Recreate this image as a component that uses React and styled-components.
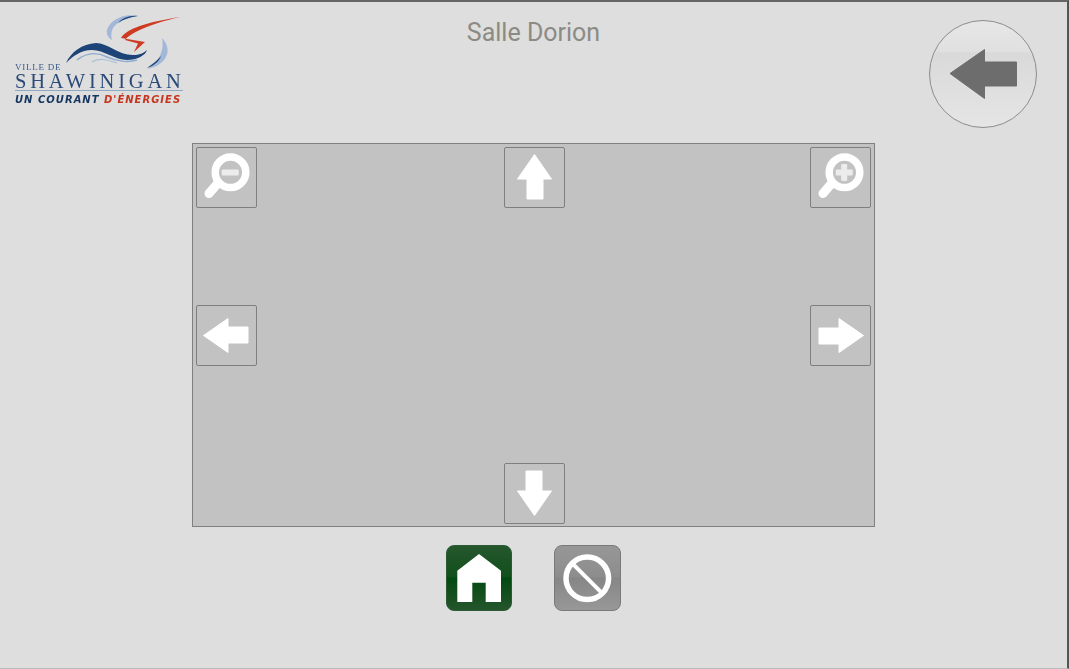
import React from 'react'
import styled, { createGlobalStyle } from 'styled-components'

const GlobalStyle = createGlobalStyle`
  html, body {
    margin: 0;
    padding: 0;
    height: 100%;
    overflow: hidden;
    background: #dedede;
  }
`

const Page = styled.div`
  box-sizing: border-box;
  width: 1069px;
  height: 669px;
  display: flex;
  flex-direction: column;
  align-items: center;
  background: #dedede;
  border-top: 2px solid #666;
  border-right: 2px solid #555;
  border-bottom: 1px solid #bbb;
  font-family: Roboto, 'Liberation Sans', sans-serif;
`

const Header = styled.header`
  width: 100%;
  height: 141px;
  display: grid;
  grid-template-columns: 1fr auto 1fr;
  align-items: start;
`

const Logo = styled.div`
  width: 169px;
  margin: 11px 0 0 14px;
  display: flex;
  flex-direction: column;
  filter: blur(0.3px);
`

const LogoMark = styled.svg`
  display: block;
  width: 169px;
  height: 50px;
  overflow: visible;
`

const LogoVille = styled.div`
  font-family: 'Liberation Serif', serif;
  font-size: 9px;
  line-height: 8px;
  letter-spacing: 0.75px;
  color: #3a5a8a;
  margin-left: 1px;
`

const LogoName = styled.div`
  font-family: 'Liberation Serif', serif;
  font-size: 20.5px;
  line-height: 18px;
  letter-spacing: 3.8px;
  color: #2b4a78;
  margin: 1px 0 0 1px;
  white-space: nowrap;
  border-bottom: 1.5px solid #8fa9c4;
`

const LogoSlogan = styled.div`
  font-family: 'DejaVu Sans', 'Liberation Sans', sans-serif;
  font-size: 10px;
  line-height: 11px;
  font-weight: 700;
  font-style: italic;
  letter-spacing: 1px;
  color: #14365f;
  margin: 3px 0 0 1px;
  white-space: nowrap;
`

const LogoAccent = styled.span`
  color: #c8351f;
`

const Title = styled.h1`
  margin: 16px 0 0;
  font-size: 25px;
  line-height: 29px;
  font-weight: 400;
  color: #8b8b84;
`

const BackButton = styled.button`
  justify-self: end;
  box-sizing: border-box;
  width: 108px;
  height: 108px;
  margin: 18px 30px 0 0;
  padding: 0;
  display: flex;
  align-items: center;
  justify-content: center;
  border: 1px solid #8c8c8c;
  border-radius: 50%;
  background: linear-gradient(#e7e7e7 0%, #e0e0e0 29%, #d9d9d9 30%, #dfdfdf 65%, #e5e5e5 100%);
`

const Panel = styled.section`
  box-sizing: border-box;
  width: 683px;
  height: 384px;
  padding: 3px 3px 2px;
  display: grid;
  grid-template-columns: 61px 63px 61px;
  grid-template-rows: 61px 61px 61px;
  justify-content: space-between;
  align-content: space-between;
  background: #c2c2c2;
  border: 1px solid #808080;
`

const PadButton = styled.button`
  box-sizing: border-box;
  width: 61px;
  height: 61px;
  padding: 0;
  justify-self: end;
  grid-column: ${({ $col }) => $col};
  grid-row: ${({ $row }) => $row};
  background: #c2c2c2;
  border: 1px solid #7f7f7f;
  border-radius: 2px;
`

const Glyph = styled.svg`
  display: block;
  width: 59px;
  height: 59px;
  transform: translateY(${({ $lift }) => -($lift || 0)}px) rotate(${({ $turn }) => $turn || 0}deg);
`

const Actions = styled.div`
  display: flex;
  gap: 42px;
  margin-top: 18px;
`

const ActionButton = styled.button`
  box-sizing: border-box;
  width: ${({ $tone }) => ($tone === 'green' ? '66px' : '67px')};
  height: 66px;
  padding: 0;
  border-radius: 8px;
  border: 1px solid ${({ $tone }) => ($tone === 'green' ? '#2c5a34' : '#797979')};
  background: ${({ $tone }) =>
    $tone === 'green'
      ? 'linear-gradient(#25562d 0%, #11501c 48%, #004a10 50%, #144f1f 75%, #24552c 100%)'
      : 'linear-gradient(#979797 0%, #8d8d8d 48%, #868686 50%, #8f8f8f 75%, #989898 100%)'};
`

const ActionGlyph = styled.svg`
  display: block;
  width: 100%;
  height: 64px;
`

const Arrow = ({ turn, lift }) => (
  <Glyph viewBox="0 0 59 59" $turn={turn} $lift={lift}>
    <path d="M29.5 6.5 L46.5 31 L38 31 L38 51 L22 51 L22 31 L12.5 31 Z" fill="#fff" stroke="#fff" strokeWidth="1" strokeLinejoin="round" />
  </Glyph>
)

const Magnifier = ({ plus }) => (
  <Glyph viewBox="0 0 59 59">
    <line x1="21" y1="35" x2="12" y2="45.5" stroke="#fff" strokeWidth="9" strokeLinecap="round" />
    <circle cx="33.5" cy="24.3" r="15.3" fill="none" stroke="#fff" strokeWidth="7.5" />
    <rect x="24.7" y="21.5" width="17" height="6" rx="1" fill="#ececec" />
    {plus && <rect x="30.2" y="16" width="6" height="17" rx="1" fill="#ececec" />}
  </Glyph>
)

export default function App() {
  return (
    <Page>
      <GlobalStyle />
      <Header>
        <Logo>
          <LogoMark viewBox="14 13 169 50">
            <path d="M66 63 C71 52 82 44 96 43 C108 43 118 55 133 55 C139 55 144 53 147 50 C146 55 137 60 127 60 C115 60 104 50 92 50 C81 50 73 56 66 63 Z" fill="#1c4478" />
            <path d="M77 60 C86 53 97 52 107 57 C116 61 128 63 137 60" fill="none" stroke="#8eabcf" strokeWidth="1.4" />
            <path d="M92 62 C99 57 108 60 117 63" fill="none" stroke="#a9bfd8" strokeWidth="1.2" />
            <path d="M180 17 C160 20 137 25 127 32 C124 34 122 36 121 38 L145 42 L134 52 L138 43.5 L125 40 C130 33 150 24 180 17 Z" fill="#cf3a22" />
            <path d="M137 16 C124 13 110 20 107 30 C106 34 108 38 112 40 C110 33 112 27 118 23 C124 19 131 17 137 16 Z" fill="#a3b7d8" />
            <path d="M118 23 C122 18 130 15 138 16 C130 17 124 19 118 23 Z" fill="#1c4478" />
            <path d="M162 38 C168 44 170 53 164 60 C159 66 152 68 147 69 C153 65 159 60 161 53 C163 48 163 43 162 38 Z" fill="#a3b7d8" />
            <path d="M161 56 C159 62 153 66 147 68 C152 64 157 61 161 56 Z" fill="#1c4478" />
          </LogoMark>
          <LogoVille>VILLE DE</LogoVille>
          <LogoName>SHAWINIGAN</LogoName>
          <LogoSlogan>
            UN COURANT <LogoAccent>D'ÉNERGIES</LogoAccent>
          </LogoSlogan>
        </Logo>
        <Title>Salle Dorion</Title>
        <BackButton aria-label="Retour">
          <svg width="72" height="54" viewBox="0 0 72 54">
            <path d="M3 26.5 L37.5 2.5 L37.5 15 L69.5 15 L69.5 39 L37.5 39 L37.5 51.5 Z" fill="#6d6d6d" stroke="#6d6d6d" strokeWidth="1" strokeLinejoin="round" />
          </svg>
        </BackButton>
      </Header>

      <Panel>
        <PadButton $col={1} $row={1} aria-label="Zoom arrière"><Magnifier /></PadButton>
        <PadButton $col={2} $row={1} aria-label="Haut"><Arrow /></PadButton>
        <PadButton $col={3} $row={1} aria-label="Zoom avant"><Magnifier plus /></PadButton>
        <PadButton $col={1} $row={2} aria-label="Gauche"><Arrow turn={-90} /></PadButton>
        <PadButton $col={3} $row={2} aria-label="Droite"><Arrow turn={90} /></PadButton>
        <PadButton $col={2} $row={3} aria-label="Bas"><Arrow turn={180} lift={1} /></PadButton>
      </Panel>

      <Actions>
        <ActionButton $tone="green" aria-label="Accueil">
          <ActionGlyph viewBox="0 0 64 64">
            <path fillRule="evenodd" d="M32 8 L54 24.7 L54 56 L38.7 56 L38.7 36.7 L25.3 36.7 L25.3 56 L10.3 56 L10.3 24.7 Z" fill="#fff" />
          </ActionGlyph>
        </ActionButton>
        <ActionButton $tone="gray" aria-label="Arrêt">
          <ActionGlyph viewBox="0 0 65 64">
            <circle cx="32.3" cy="32.3" r="21.3" fill="none" stroke="#fff" strokeWidth="5.5" />
            <line x1="17.3" y1="17.3" x2="47.3" y2="47.3" stroke="#fff" strokeWidth="4" />
          </ActionGlyph>
        </ActionButton>
      </Actions>
    </Page>
  )
}
